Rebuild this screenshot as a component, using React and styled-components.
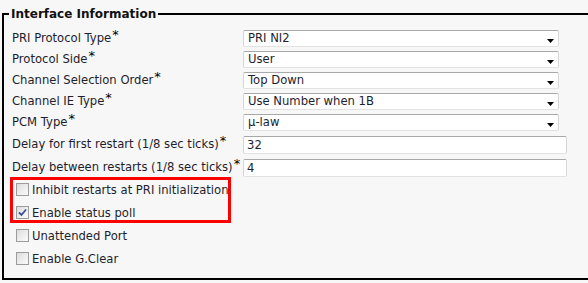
import React from "react";
import styled, { createGlobalStyle } from "styled-components";

const Global = createGlobalStyle`
  html, body { margin: 0; padding: 0; background: #f7f7f7; overflow: hidden; }
  body { font-family: "DejaVu Sans", Verdana, sans-serif; font-size: 11.6px; color: #222; }
`;

const Page = styled.div`
  width: 588px;
  height: 283px;
  overflow: hidden;
  padding: 7px 0 0 2px;
  box-sizing: border-box;
`;

const Fieldset = styled.fieldset`
  width: 620px;
  margin: 0;
  border: 2px solid #000;
  border-right: none;
  padding: 7px 0 8px 8px;
  box-sizing: border-box;
`;

const Legend = styled.legend`
  font-weight: bold;
  font-size: 12px;
  padding: 0 2px;
  margin-left: -3px;
  color: #111;
`;

const Row = styled.div`
  display: flex;
  align-items: center;
  height: ${(p) => p.$h}px;
`;

const Label = styled.label`
  width: 231px;
  flex: none;
  white-space: nowrap;
  color: #1e1e2e;
  margin-top: -2px;
`;

const Star = styled.sup`
  font-size: 13px;
  line-height: 0;
  margin-left: 1px;
  vertical-align: 3px;
  color: #000;
`;

const SelectWrap = styled.div`
  position: relative;
  width: 316px;
  height: 17px;
`;

const Select = styled.div`
  box-sizing: border-box;
  width: 100%;
  height: 100%;
  background: #fff;
  border: 1px solid;
  border-color: #a8a8a8 #d6d6d6 #e2e2e2 #d6d6d6;
  border-radius: 2px;
  padding-left: 4px;
  line-height: 15px;
  color: #1e1e2e;
`;

const Arrow = styled.svg`
  position: absolute;
  right: 5px;
  top: 9px;
`;

const Input = styled.div`
  box-sizing: border-box;
  width: 324px;
  height: 18px;
  background: #fff;
  border: 1px solid;
  border-color: #a8a8a8 #d6d6d6 #e2e2e2 #d6d6d6;
  border-radius: 2px;
  padding-left: 3px;
  line-height: 16px;
  color: #1e1e2e;
`;

const Highlight = styled.div`
  width: 221px;
  box-sizing: border-box;
  border: 3px solid #f00;
  margin: -2px 0 1px -2px;
  padding: 3px 0 1px 3px;
  display: flex;
  flex-direction: column;
  gap: 10px;
`;

const CheckRow = styled.div`
  display: flex;
  align-items: center;
  height: ${(p) => (p.$outer ? 23 : 13)}px;
  padding-left: ${(p) => (p.$outer ? 4 : 0)}px;
`;

const Box = styled.span`
  box-sizing: border-box;
  width: 13px;
  height: 13px;
  flex: none;
  border: 1px solid #9c9c9c;
  background: linear-gradient(135deg, #dcdcdc 0%, #f0f0f0 60%, #fafafa 100%);
  display: flex;
  align-items: center;
  justify-content: center;
  margin-right: 3px;
`;

const CheckText = styled.span`
  color: #1e1e2e;
  white-space: nowrap;
`;

function DropArrow() {
  return (
    <Arrow width="7" height="4" viewBox="0 0 7 4">
      <path d="M0 0H7L3.5 4Z" fill="#000" />
    </Arrow>
  );
}

function SelectField({ value }) {
  return (
    <SelectWrap>
      <Select>{value}</Select>
      <DropArrow />
    </SelectWrap>
  );
}

function Check({ checked, children, outer }) {
  return (
    <CheckRow $outer={outer}>
      <Box>
        {checked && (
          <svg width="9" height="9" viewBox="0 0 9 9">
            <path d="M1 4.5L3.5 7L8 1.5" stroke="#3a4fa0" strokeWidth="1.8" fill="none" />
          </svg>
        )}
      </Box>
      <CheckText>{children}</CheckText>
    </CheckRow>
  );
}

const selects = [
  ["PRI Protocol Type", "PRI NI2"],
  ["Protocol Side", "User"],
  ["Channel Selection Order", "Top Down"],
  ["Channel IE Type", "Use Number when 1B"],
  ["PCM Type", "\u00b5-law"],
];

const inputs = [
  ["Delay for first restart (1/8 sec ticks)", "32"],
  ["Delay between restarts (1/8 sec ticks)", "4"],
];

export default function App() {
  return (
    <>
      <Global />
      <Page>
        <Fieldset>
          <Legend>Interface Information</Legend>
          {selects.map(([l, v]) => (
            <Row key={l} $h={21}>
              <Label>
                {l}
                <Star>*</Star>
              </Label>
              <SelectField value={v} />
            </Row>
          ))}
          {inputs.map(([l, v]) => (
            <Row key={l} $h={23}>
              <Label>
                {l}
                <Star>*</Star>
              </Label>
              <Input>{v}</Input>
            </Row>
          ))}
          <Highlight>
            <Check>Inhibit restarts at PRI initialization</Check>
            <Check checked>Enable status poll</Check>
          </Highlight>
          <Check outer>Unattended Port</Check>
          <Check outer>Enable G.Clear</Check>
        </Fieldset>
      </Page>
    </>
  );
}
